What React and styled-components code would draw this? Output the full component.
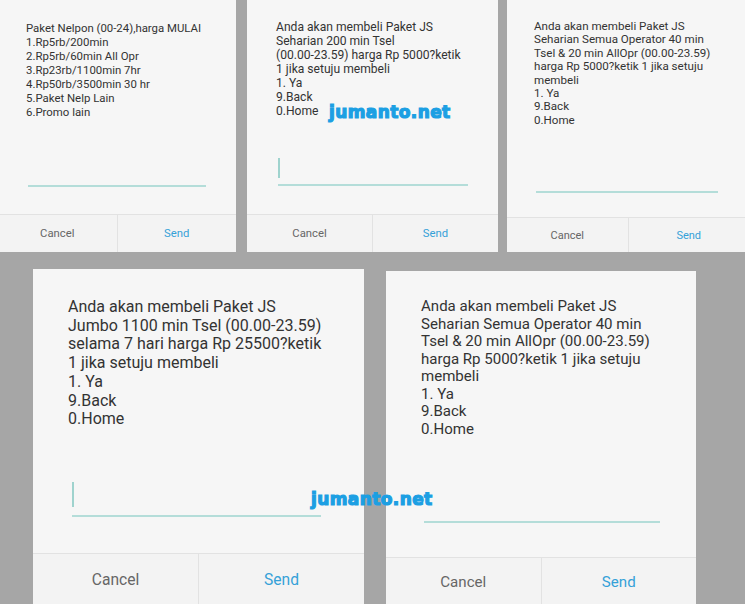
import React from "react";
import styled, { createGlobalStyle } from "styled-components";

const Global = createGlobalStyle`
  html, body {
    margin: 0;
    padding: 0;
    height: 604px;
    overflow: hidden;
    background: #a6a6a6;
  }
  #root { height: 604px; }
`;

const Page = styled.div`
  position: relative;
  width: 745px;
  height: 604px;
  overflow: hidden;
  background: #a6a6a6;
  font-family: Roboto, "Noto Sans", sans-serif;
  display: flex;
  flex-direction: column;
`;

const TopRow = styled.div`
  display: flex;
  align-items: flex-start;
  height: 252px;
  margin-left: -2px;
  flex-shrink: 0;
`;

const BottomRow = styled.div`
  display: flex;
  align-items: flex-start;
  gap: 22px;
  margin-top: 17px;
  padding-left: 33px;
`;

const Panel = styled.div`
  flex-shrink: 0;
  width: ${(p) => p.$w}px;
  height: ${(p) => p.$h}px;
  margin-left: ${(p) => p.$ml || 0}px;
  margin-top: ${(p) => p.$mt || 0}px;
  background: #f6f6f6;
  display: flex;
  flex-direction: column;
`;

const Message = styled.div`
  padding: ${(p) => p.$pt}px 0 0 ${(p) => p.$pl}px;
  font-size: ${(p) => p.$fs}px;
  line-height: ${(p) => p.$lh}px;
  color: #333333;
  white-space: pre;
`;

const Spacer = styled.div`
  flex: 1;
`;

const InputField = styled.div`
  position: relative;
  height: ${(p) => p.$ih}px;
  margin: 0 0 ${(p) => p.$mb}px ${(p) => p.$il}px;
  width: ${(p) => p.$iw}px;
  border-bottom: 2px solid #b4ddd9;
  display: flex;
  align-items: flex-end;
`;

const Cursor = styled.span`
  display: block;
  width: 2px;
  height: ${(p) => p.$ch}px;
  margin-bottom: ${(p) => p.$cb}px;
  background: #9fd3ce;
`;

const ButtonRow = styled.div`
  display: flex;
  height: ${(p) => p.$bh}px;
  flex-shrink: 0;
  background: #f3f3f3;
  border-top: 1px solid #e2e2e2;
`;

const DialogButton = styled.div`
  flex: 1;
  display: flex;
  align-items: center;
  justify-content: center;
  font-size: ${(p) => p.$fs}px;
  color: ${(p) => (p.$primary ? "#35a1d8" : "#666666")};
  & + & {
    border-left: 1px solid #e2e2e2;
  }
`;

const Watermark = styled.div`
  position: absolute;
  left: ${(p) => p.$x}px;
  top: ${(p) => p.$y}px;
  font-family: "DejaVu Sans", sans-serif;
  font-weight: 900;
  font-size: 17px;
  letter-spacing: 0.4px;
  color: #1c9fe3;
  line-height: 1;
  -webkit-text-stroke: 1.2px #1c9fe3;
`;

const dialogs = {
  top: [
    {
      w: 238, h: 252, ml: 0,
      pt: 21, pl: 28, fs: 11.4, lh: 14,
      text: "Paket Nelpon (00-24),harga MULAI\n1.Rp5rb/200min\n2.Rp5rb/60min All Opr\n3.Rp23rb/1100min 7hr\n4.Rp50rb/3500min 30 hr\n5.Paket Nelp Lain\n6.Promo lain",
      il: 30, iw: 178, ih: 26, mb: 27, cursor: false,
      bh: 37, bfs: 11.3,
    },
    {
      w: 251, h: 252, ml: 11,
      pt: 20, pl: 29, fs: 12.1, lh: 14,
      text: "Anda akan membeli Paket JS\nSeharian 200 min Tsel\n(00.00-23.59) harga Rp 5000?ketik\n1 jika setuju membeli\n1. Ya\n9.Back\n0.Home",
      il: 31, iw: 190, ih: 28, mb: 28, cursor: true, ch: 20, cb: 6,
      bh: 37, bfs: 11.3,
    },
    {
      w: 242, h: 252, ml: 9,
      pt: 20, pl: 27, fs: 11.6, lh: 13.4,
      text: "Anda akan membeli Paket JS\nSeharian Semua Operator 40 min\nTsel & 20 min AllOpr (00.00-23.59)\nharga Rp 5000?ketik 1 jika setuju\nmembeli\n1. Ya\n9.Back\n0.Home",
      il: 29, iw: 182, ih: 26, mb: 24, cursor: false,
      bh: 34, bfs: 11,
    },
  ],
  bottom: [
    {
      w: 331, h: 337, mt: 0,
      pt: 29, pl: 35, fs: 16, lh: 18.7,
      text: "Anda akan membeli Paket JS\nJumbo 1100 min Tsel (00.00-23.59)\nselama 7 hari harga Rp 25500?ketik\n1 jika setuju membeli\n1. Ya\n9.Back\n0.Home",
      il: 39, iw: 249, ih: 40, mb: 36, cursor: true, ch: 25, cb: 8,
      bh: 52, bfs: 15.6,
    },
    {
      w: 310, h: 335, mt: 2,
      pt: 27, pl: 35, fs: 15.05, lh: 17.5,
      text: "Anda akan membeli Paket JS\nSeharian Semua Operator 40 min\nTsel & 20 min AllOpr (00.00-23.59)\nharga Rp 5000?ketik 1 jika setuju\nmembeli\n1. Ya\n9.Back\n0.Home",
      il: 38, iw: 236, ih: 40, mb: 34, cursor: false,
      bh: 48, bfs: 15.1,
    },
  ],
};

function Dialog({ d }) {
  return (
    <Panel $w={d.w} $h={d.h} $ml={d.ml} $mt={d.mt}>
      <Message $pt={d.pt} $pl={d.pl} $fs={d.fs} $lh={d.lh}>
        {d.text}
      </Message>
      <Spacer />
      <InputField $il={d.il} $iw={d.iw} $ih={d.ih} $mb={d.mb}>
        {d.cursor && <Cursor $ch={d.ch} $cb={d.cb} />}
      </InputField>
      <ButtonRow $bh={d.bh}>
        <DialogButton $fs={d.bfs}>Cancel</DialogButton>
        <DialogButton $fs={d.bfs} $primary>
          Send
        </DialogButton>
      </ButtonRow>
    </Panel>
  );
}

export default function App() {
  return (
    <>
      <Global />
      <Page>
        <TopRow>
          {dialogs.top.map((d, i) => (
            <Dialog key={i} d={d} />
          ))}
        </TopRow>
        <BottomRow>
          {dialogs.bottom.map((d, i) => (
            <Dialog key={i} d={d} />
          ))}
        </BottomRow>
        <Watermark $x={329} $y={104}>jumanto.net</Watermark>
        <Watermark $x={311} $y={491}>jumanto.net</Watermark>
      </Page>
    </>
  );
}
